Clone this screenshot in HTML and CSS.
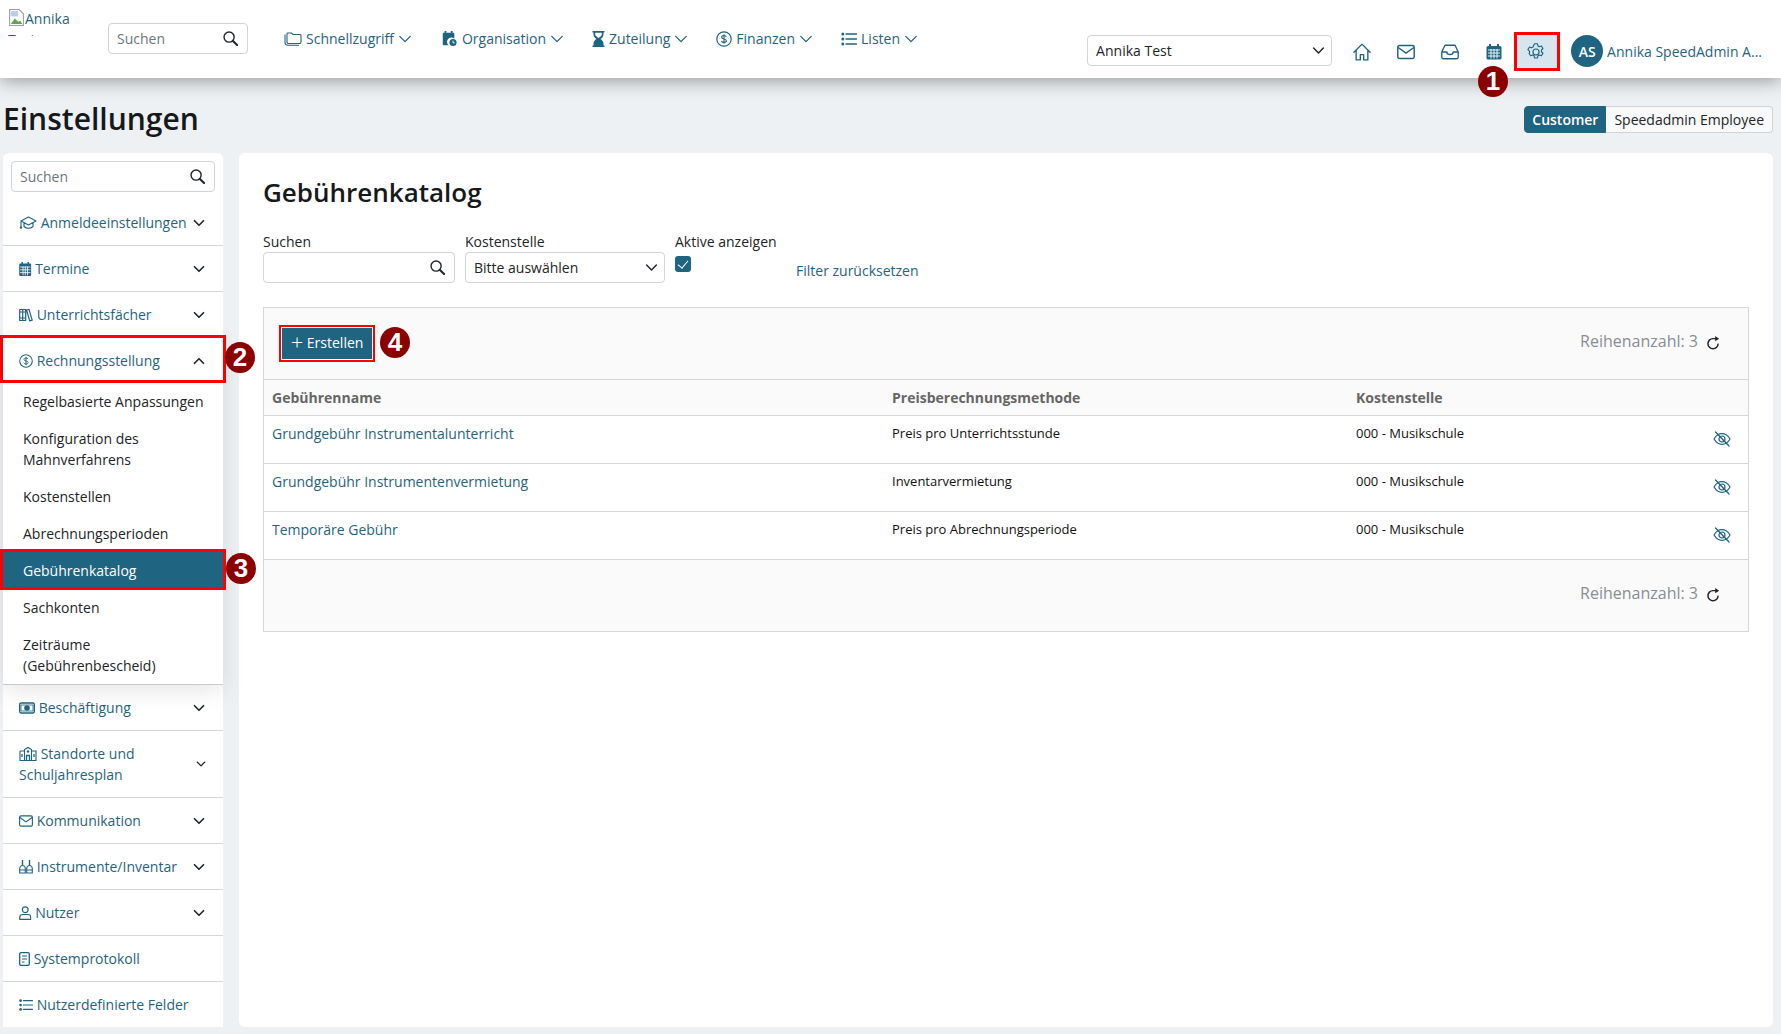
FILE: index.html
```html
<!DOCTYPE html>
<html lang="de">
<head>
  <title>Gebührenkatalog</title>
  <meta charset="utf-8">
  <link rel="stylesheet" href="styles.css">
</head>
<body>
  <svg class="sprite" xmlns="http://www.w3.org/2000/svg">
    <symbol id="i-search" viewBox="0 0 16 16"><circle cx="6.5" cy="6.5" r="5.4" fill="none" stroke="currentColor" stroke-width="1.500"/><path d="M10.600 10.600l4.400 4.400" stroke="currentColor" stroke-width="2.200" stroke-linecap="round"/></symbol>
    <symbol id="i-down" viewBox="0 0 16 16"><path d="M2 5l6 6 6-6" fill="none" stroke="currentColor" stroke-linecap="round" stroke-linejoin="round"/></symbol>
    <symbol id="i-up" viewBox="0 0 16 16"><path d="M2 11l6-6 6 6" fill="none" stroke="currentColor" stroke-linecap="round" stroke-linejoin="round"/></symbol>
    <symbol id="i-folders" viewBox="0 0 18 16" preserveAspectRatio="none"><path d="M3.500 2h4l1.500 1.500h7a1 1 0 0 1 1 1V11a1.500 1.500 0 0 1-1.500 1.500h-11A1.500 1.500 0 0 1 3 11V2.500a.5.5 0 0 1 .5-.5zM1 3.500v8a3 3 0 0 0 3 2.800h11" fill="none" stroke="currentColor" stroke-width="1.100"/></symbol>
    <symbol id="i-calclock" viewBox="0 0 18 18"><path d="M4 0h2v2h5V0h2v2h1a1 1 0 0 1 1 1v5.500a4.800 4.800 0 0 0-6.500 7.500H3a1 1 0 0 1-1-1V3a1 1 0 0 1 1-1h1z" fill="currentColor"/><circle cx="13.500" cy="13" r="4" fill="currentColor"/><path d="M13.500 10.800v2.500h2" fill="none" stroke="#fff" stroke-width="1"/></symbol>
    <symbol id="i-hourglass" viewBox="0 0 13 16"><path d="M.5 0h12v1.500h-1v2c0 2-1.500 3.500-3 4.500 1.500 1 3 2.500 3 4.500v2h1V16H.5v-1.500h1v-2c0-2 1.500-3.500 3-4.500-1.500-1-3-2.500-3-4.500v-2h-1z" fill="currentColor"/><path d="M3.200 1.800h6.600v1.700c0 1.200-1.800 2.600-3.300 3.500-1.500-.9-3.300-2.300-3.300-3.500z" fill="#fff"/></symbol>
    <symbol id="i-dollar" viewBox="0 0 16 16"><circle cx="8" cy="8" r="7.200" fill="none" stroke="currentColor" stroke-width="1.200"/><path d="M10.300 5.800C10 4.900 9.100 4.500 8 4.500c-1.300 0-2.300.6-2.300 1.700 0 2.400 4.700 1.200 4.700 3.600 0 1.100-1 1.700-2.400 1.700-1.200 0-2.200-.5-2.500-1.500M8 3.300v9.400" fill="none" stroke="currentColor" stroke-width="1.100"/></symbol>
    <symbol id="i-list" viewBox="0 0 16 16"><path d="M5 3h10.500M5 8h10.500M5 13h10.500" stroke="currentColor" stroke-width="1.300" stroke-linecap="round"/><circle cx="1.800" cy="3" r="1.500" fill="currentColor"/><circle cx="1.800" cy="8" r="1.500" fill="currentColor"/><circle cx="1.800" cy="13" r="1.500" fill="currentColor"/></symbol>
    <symbol id="i-house" viewBox="0 0 16 16"><path d="M.8 8.300L8 1l7.200 7.300M2.800 6.300V15h3.700v-4.700h3V15h3.700V6.300" fill="none" stroke="currentColor" stroke-width="1.200" stroke-linejoin="round" stroke-linecap="round"/></symbol>
    <symbol id="i-mail" viewBox="0 0 16 16"><rect x=".7" y="2.200" width="14.600" height="11.600" rx="1.500" fill="none" stroke="currentColor" stroke-width="1.300"/><path d="M1 4l7 5 7-5" fill="none" stroke="currentColor" stroke-width="1.300"/></symbol>
    <symbol id="i-inbox" viewBox="0 0 16 16"><path d="M3.500 2h9l2.800 6v4.500a1.500 1.500 0 0 1-1.500 1.500H2.200a1.500 1.500 0 0 1-1.500-1.500V8zM.9 8h4.300c0 3 5.600 3 5.600 0h4.300" fill="none" stroke="currentColor" stroke-width="1.200" stroke-linejoin="round"/></symbol>
    <symbol id="i-calendar" viewBox="0 0 16 16"><path d="M3 0h2v2h6V0h2v2h1a1.500 1.500 0 0 1 1.500 1.500V14a1.500 1.500 0 0 1-1.500 1.500H2A1.500 1.500 0 0 1 .5 14V3.500A1.500 1.500 0 0 1 2 2h1z" fill="currentColor"/><path d="M2 6h12M2 9h12M2 12h12M5 5v9.500M8 5v9.500M11 5v9.500" stroke="#fff" stroke-width=".9"/></symbol>
    <symbol id="i-gear" viewBox="0 0 16 16"><circle cx="8" cy="8" r="2.700" fill="none" stroke="currentColor" stroke-width="1"/><path d="M6.700.7h2.600l.4 1.900 1.300.7 1.800-.7 1.400 2.300-1.400 1.300v1.600l1.400 1.300-1.400 2.300-1.800-.7-1.300.7-.4 1.900H6.700l-.4-1.900-1.300-.7-1.800.7-1.400-2.300L2.200 8.800V7.200L.8 5.900l1.400-2.300 1.800.7 1.300-.7z" fill="none" stroke="currentColor" stroke-width="1" stroke-linejoin="round"/></symbol>
    <symbol id="i-grad" viewBox="0 0 18 16"><path d="M9.500 2L2 6l7.500 4L17 6zM5 8v3.500c2.500 2.300 6.500 2.300 9 0V8M2 6.500v5" fill="none" stroke="currentColor" stroke-width="1.100" stroke-linejoin="round"/><circle cx="2" cy="12.500" r="1.200" fill="currentColor"/></symbol>
    <symbol id="i-books" viewBox="0 0 14 14"><path d="M.7 1.500h3v11h-3zM3.700 1.500h3v11h-3zM7.500 2l2.500-.7 3.200 10.800-2.500.8z" fill="none" stroke="currentColor" stroke-width="1.200" stroke-linejoin="round"/><path d="M.7 4h6M.7 10h6" stroke="currentColor" stroke-width="1"/></symbol>
    <symbol id="i-cash" viewBox="0 0 16 14"><rect x=".7" y="2" width="14.600" height="10" rx="1.500" fill="none" stroke="currentColor" stroke-width="1.400"/><circle cx="8" cy="7" r="2.800" fill="currentColor"/><path d="M2 4h12v6H2z" fill="none" stroke="currentColor" stroke-width=".8"/></symbol>
    <symbol id="i-school" viewBox="0 0 18 16"><path d="M1 5h4.500M12.500 5H17v9.500H1V5M5.500 14.500V3.500L9 1.500l3.500 2v11" fill="none" stroke="currentColor" stroke-width="1.100"/><circle cx="9" cy="5.500" r="1.200" fill="currentColor"/><path d="M7.500 14.500v-5h3v5M3 8v3M15 8v3" stroke="currentColor" stroke-width="1.300" fill="none"/></symbol>
    <symbol id="i-instr" viewBox="0 0 14 14"><path d="M3.500 0v5M10.500 0v5" stroke="currentColor" stroke-width="1.400"/><path d="M.7 13V8.500c0-1.500 1.300-3 2.800-3s2.800 1.500 2.800 3V13zM7.700 13V8.500c0-1.500 1.300-3 2.800-3s2.800 1.500 2.800 3V13z" fill="none" stroke="currentColor" stroke-width="1.100"/><path d="M.7 10h5.600M7.700 10h5.600" stroke="currentColor" stroke-width="1"/></symbol>
    <symbol id="i-person" viewBox="0 0 12.500 14"><circle cx="6.250" cy="3.700" r="2.900" fill="none" stroke="currentColor" stroke-width="1.200"/><path d="M.7 13.300v-1.800c0-1.900 1.300-3 3-3h5.100c1.700 0 3 1.100 3 3v1.800z" fill="none" stroke="currentColor" stroke-width="1.200" stroke-linejoin="round"/></symbol>
    <symbol id="i-doc" viewBox="0 0 11 14"><rect x=".7" y=".7" width="9.600" height="12.600" rx="1.300" fill="none" stroke="currentColor" stroke-width="1.300"/><path d="M3 4h5M3 7h5M3 10h2.500" stroke="currentColor" stroke-width="1.200"/></symbol>
    <symbol id="i-caldark" viewBox="0 0 12.500 14"><path d="M2.500 0h1.500v1.500h4.500V0H10v1.500h1a1.300 1.300 0 0 1 1.300 1.300V12.700A1.300 1.300 0 0 1 11 14H1.500A1.300 1.300 0 0 1 .2 12.700V2.800A1.300 1.300 0 0 1 1.500 1.500h1z" fill="currentColor"/><path d="M1 5h10.500M1 7.800h10.500M1 10.600h10.500M4 4.500v8.800M6.250 4.500v8.800M8.500 4.500v8.800" stroke="#fff" stroke-width=".8"/></symbol>
    <symbol id="i-refresh" viewBox="0 0 16 16"><path d="M13.800 8.700A5.800 5.800 0 1 1 8 3h3.500" fill="none" stroke="currentColor" stroke-width="1.700"/><path d="M10.500 0l4.500 3-4.500 3z" fill="currentColor"/></symbol>
    <symbol id="i-eyeoff" viewBox="0 0 18 16"><path d="M1 8c2-3.500 5-5.300 8-5.300S15 4.500 17 8c-2 3.500-5 5.300-8 5.300S3 11.500 1 8z" fill="none" stroke="currentColor" stroke-width="1.200"/><circle cx="9" cy="8" r="3" fill="none" stroke="currentColor" stroke-width="1.200"/><path d="M2.500 1l13.500 14" stroke="currentColor" stroke-width="1.300" stroke-linecap="round"/></symbol>
  </svg>

  <header class="topbar">
    <div class="topbar-left">
      <a class="logo">
        <svg class="logo-broken" viewBox="0 0 16 16"><path d="M1.500.5h9l4 4v11h-13z" fill="#fff" stroke="#9aa0a6"/><path d="M2.500 14l4-5 3 3 2-1 2 3z" fill="#5fa84a"/><path d="M2.500 2h7v5h-7z" fill="#b9cdf0"/></svg>Annika Test Hub
      </a>
      <div class="search search-top">
        <input type="text" placeholder="Suchen">
        <svg class="search-icon"><use href="#i-search"/></svg>
      </div>
      <nav class="mainnav">
        <a class="nav-item"><svg class="ico ico-18"><use href="#i-folders"/></svg>Schnellzugriff<svg class="chev"><use href="#i-down"/></svg></a>
        <a class="nav-item"><svg class="ico ico-18"><use href="#i-calclock"/></svg>Organisation<svg class="chev"><use href="#i-down"/></svg></a>
        <a class="nav-item"><svg class="ico ico-13"><use href="#i-hourglass"/></svg>Zuteilung<svg class="chev"><use href="#i-down"/></svg></a>
        <a class="nav-item"><svg class="ico"><use href="#i-dollar"/></svg>Finanzen<svg class="chev"><use href="#i-down"/></svg></a>
        <a class="nav-item"><svg class="ico"><use href="#i-list"/></svg>Listen<svg class="chev"><use href="#i-down"/></svg></a>
      </nav>
    </div>
    <div class="topbar-right">
      <div class="select select-school">
        <select><option>Annika Test</option></select>
        <svg class="chev"><use href="#i-down"/></svg>
      </div>
      <div class="tools">
        <a class="tool"><svg><use href="#i-house"/></svg></a>
        <a class="tool"><svg><use href="#i-mail"/></svg></a>
        <a class="tool"><svg><use href="#i-inbox"/></svg></a>
        <a class="tool"><svg><use href="#i-calendar"/></svg></a>
        <a class="tool tool-on"><svg><use href="#i-gear"/></svg></a>
      </div>
      <a class="user"><span class="avatar">AS</span><span class="user-name">Annika SpeedAdmin A...</span></a>
    </div>
  </header>

  <div class="page">
    <div class="page-head">
      <h1>Einstellungen</h1>
      <div class="toggle">
        <button class="toggle-btn toggle-on">Customer</button>
        <button class="toggle-btn">Speedadmin Employee</button>
      </div>
    </div>

    <div class="columns">
      <aside class="sidebar">
        <div class="side-search">
          <div class="search">
            <input type="text" placeholder="Suchen">
            <svg class="search-icon"><use href="#i-search"/></svg>
          </div>
        </div>
        <a class="side-row"><span><svg class="ico ico-18"><use href="#i-grad"/></svg> Anmeldeeinstellungen</span><svg class="chev"><use href="#i-down"/></svg></a>
        <a class="side-row"><span><svg class="ico ico-12"><use href="#i-caldark"/></svg> Termine</span><svg class="chev"><use href="#i-down"/></svg></a>
        <a class="side-row"><span><svg class="ico ico-14"><use href="#i-books"/></svg> Unterrichtsfächer</span><svg class="chev"><use href="#i-down"/></svg></a>
        <div class="side-group">
          <a class="side-row side-row-open marked"><span><svg class="ico ico-14"><use href="#i-dollar"/></svg> Rechnungsstellung</span><svg class="chev"><use href="#i-up"/></svg></a>
          <a class="side-sub">Regelbasierte Anpassungen</a>
          <a class="side-sub">Konfiguration des Mahnverfahrens</a>
          <a class="side-sub">Kostenstellen</a>
          <a class="side-sub">Abrechnungsperioden</a>
          <a class="side-sub side-sub-on marked">Gebührenkatalog</a>
          <a class="side-sub">Sachkonten</a>
          <a class="side-sub">Zeiträume (Gebührenbescheid)</a>
        </div>
        <a class="side-row"><span><svg class="ico ico-16"><use href="#i-cash"/></svg> Beschäftigung</span><svg class="chev"><use href="#i-down"/></svg></a>
        <a class="side-row"><span><svg class="ico ico-18"><use href="#i-school"/></svg> Standorte und Schuljahresplan</span><svg class="chev chev-small"><use href="#i-down"/></svg></a>
        <a class="side-row"><span><svg class="ico ico-14"><use href="#i-mail"/></svg> Kommunikation</span><svg class="chev"><use href="#i-down"/></svg></a>
        <a class="side-row"><span><svg class="ico ico-14"><use href="#i-instr"/></svg> Instrumente/Inventar</span><svg class="chev"><use href="#i-down"/></svg></a>
        <a class="side-row"><span><svg class="ico ico-12"><use href="#i-person"/></svg> Nutzer</span><svg class="chev"><use href="#i-down"/></svg></a>
        <a class="side-row"><span><svg class="ico ico-11"><use href="#i-doc"/></svg> Systemprotokoll</span></a>
        <a class="side-row side-row-last"><span><svg class="ico ico-14"><use href="#i-list"/></svg> Nutzerdefinierte Felder</span></a>
      </aside>

      <main class="content">
        <h2>Gebührenkatalog</h2>
        <div class="filters">
          <div class="field field-search">
            <label>Suchen</label>
            <div class="search">
              <input type="text">
              <svg class="search-icon"><use href="#i-search"/></svg>
            </div>
          </div>
          <div class="field field-select">
            <label>Kostenstelle</label>
            <div class="select">
              <select><option>Bitte auswählen</option></select>
              <svg class="chev"><use href="#i-down"/></svg>
            </div>
          </div>
          <div class="field field-check">
            <label>Aktive anzeigen</label>
            <input class="check" type="checkbox" checked>
          </div>
          <a class="reset">Filter zurücksetzen</a>
        </div>

        <div class="grid-box">
          <div class="grid-bar">
            <button class="btn-create"><span class="plus">+</span> Erstellen</button>
            <div class="rowcount">Reihenanzahl: 3 <svg><use href="#i-refresh"/></svg></div>
          </div>
          <table class="fees">
            <thead>
              <tr><th class="col-name">Gebührenname</th><th class="col-method">Preisberechnungsmethode</th><th>Kostenstelle</th><th class="col-eye"></th></tr>
            </thead>
            <tbody>
              <tr><td><a>Grundgebühr Instrumentalunterricht</a></td><td>Preis pro Unterrichtsstunde</td><td>000 - Musikschule</td><td class="col-eye"><svg><use href="#i-eyeoff"/></svg></td></tr>
              <tr><td><a>Grundgebühr Instrumentenvermietung</a></td><td>Inventarvermietung</td><td>000 - Musikschule</td><td class="col-eye"><svg><use href="#i-eyeoff"/></svg></td></tr>
              <tr><td><a>Temporäre Gebühr</a></td><td>Preis pro Abrechnungsperiode</td><td>000 - Musikschule</td><td class="col-eye"><svg><use href="#i-eyeoff"/></svg></td></tr>
            </tbody>
          </table>
          <div class="grid-bar grid-bar-bottom">
            <div class="rowcount">Reihenanzahl: 3 <svg><use href="#i-refresh"/></svg></div>
          </div>
        </div>
      </main>
    </div>
  </div>

  <span class="badge badge-1">1</span>
  <span class="badge badge-2">2</span>
  <span class="badge badge-3">3</span>
  <span class="badge badge-4">4</span>
</body>
</html>
```

FILE: styles.css
```css
* {
  box-sizing: border-box;
}

body {
  margin: 0;
  height: 1034px;
  overflow: hidden;
  position: relative;
  background-color: #eef1f3;
  color: #212529;
  font-family: "Open Sans", sans-serif;
  font-size: 14px;
  line-height: 21px;
}

a {
  color: #1f6480;
  text-decoration: none;
}

.sprite {
  display: none;
}

/* shared bits */
.ico {
  width: 16px;
  height: 16px;
  vertical-align: -3px;
}
.ico-18 {
  width: 18px;
}
.ico-16 {
  width: 16px;
  height: 14px;
  vertical-align: -2px;
}
.ico-14 {
  width: 14px;
  height: 14px;
  vertical-align: -2px;
}
.ico-13 {
  width: 13px;
}
.ico-12 {
  width: 12.5px;
  height: 14px;
  vertical-align: -2px;
}
.ico-11 {
  width: 11px;
  height: 14px;
  vertical-align: -2px;
}
.chev {
  width: 14px;
  height: 14px;
  flex: none;
  stroke-width: 1.5;
}

.search {
  position: relative;
}
.search input {
  width: 100%;
  height: 100%;
  border: 1px solid #ced4da;
  border-radius: 4px;
  padding: 0 30px 0 8px;
  font: 14px "Open Sans", sans-serif;
  color: #212529;
  background: #fff;
}
.search input::placeholder {
  color: #6c757d;
}
.search-icon {
  position: absolute;
  right: 10px;
  top: 8px;
  width: 15px;
  height: 15px;
  color: #212529;
}

.select {
  position: relative;
  height: 31px;
}
.select select {
  appearance: none;
  width: 100%;
  height: 100%;
  border: 1px solid #ced4da;
  border-radius: 4px;
  padding: 0 28px 0 8px;
  font: 14px "Open Sans", sans-serif;
  color: #212529;
  background: #fff;
}
.select .chev {
  position: absolute;
  right: 7px;
  top: 9px;
  width: 13px;
  height: 13px;
  stroke-width: 1.8;
  color: #212529;
}

/* red frame round a marked sidebar entry */
.marked::after {
  content: "";
  position: absolute;
  z-index: 2;
  top: -3px;
  right: -3px;
  bottom: -1px;
  left: -3px;
  border: 3px solid #f00;
  pointer-events: none;
}

/* top bar */
.topbar {
  position: relative;
  z-index: 2;
  height: 78px;
  display: flex;
  justify-content: space-between;
  background: #fff;
  box-shadow: 0 2px 18px rgba(0, 0, 0, 0.4);
}
.topbar-left {
  display: flex;
  align-items: flex-start;
}
.logo {
  display: block;
  width: 64px;
  height: 28px;
  margin: 8px 0 0 8px;
  overflow: hidden;
  line-height: 21px;
  word-spacing: 20px;
}
.logo-broken {
  width: 17px;
  height: 17px;
  vertical-align: -2px;
}
.search-top {
  width: 140px;
  height: 31px;
  margin: 23px 0 0 36px;
}
.mainnav {
  display: flex;
  gap: 28px;
  margin: 28px 0 0 36px;
}
.nav-item {
  display: flex;
  align-items: center;
  height: 21px;
}
.nav-item .ico {
  margin-right: 4px;
}
.nav-item .chev {
  margin-left: 4px;
}

.topbar-right {
  display: flex;
  align-items: flex-start;
  padding-right: 19px;
}
.select-school {
  width: 245px;
  margin: 35px 1px 0 0;
}
.tools {
  display: flex;
  align-items: center;
  margin: 32px 0 0 7px;
}
.tool {
  width: 44px;
  height: 39px;
  display: flex;
  align-items: center;
  justify-content: center;
}
.tool svg {
  width: 18px;
  height: 18px;
}
.tool:nth-child(4) svg {
  width: 16px;
  height: 16px;
}
.tool-on {
  width: 46px;
  margin-left: -2px;
  padding-right: 2px;
  background: #d7e6ee;
  outline: 3px solid #f00;
  outline-offset: -3px;
}
.user {
  display: flex;
  align-items: center;
  gap: 4px;
  margin: 35px 0 0 11px;
}
.avatar {
  width: 32px;
  height: 32px;
  border-radius: 50%;
  background: #1f6480;
  color: #fff;
  font-weight: 600;
  display: flex;
  align-items: center;
  justify-content: center;
}

/* page */
.page {
  padding: 0 8px 0 3px;
}
.page-head {
  height: 75px;
  display: flex;
  align-items: center;
  justify-content: space-between;
  padding-top: 7px;
}
h1 {
  margin: 0;
  font-size: 30px;
  line-height: 36px;
  font-weight: 600;
  color: #16191c;
}
.toggle {
  display: flex;
  margin-top: 1px;
}
.toggle-btn {
  height: 27px;
  padding: 0 8px;
  border: 1px solid #ced4da;
  border-left: 0;
  border-radius: 0 4px 4px 0;
  background: #f8f9fa;
  font: 14px "Open Sans", sans-serif;
  color: #212529;
}
.toggle-on {
  background: #1f6480;
  border: 1px solid #1f6480;
  border-radius: 4px 0 0 4px;
  padding: 0 7px;
  color: #fff;
  font-weight: 600;
}

.columns {
  display: flex;
  gap: 16px;
  height: 874px;
}

/* sidebar */
.sidebar {
  flex: none;
  width: 220px;
  background: #fff;
  border-radius: 6px 6px 0 0;
}
.side-search {
  height: 47px;
  padding: 8px 8px 0;
}
.side-search .search {
  height: 31px;
}
.side-row {
  display: flex;
  align-items: center;
  justify-content: space-between;
  gap: 4px;
  padding: 12px 18px 12px 16px;
  border-bottom: 1px solid #d5d8da;
  background: #fff;
}
.side-row .chev {
  width: 12px;
  height: 12px;
  stroke-width: 2.2;
  color: #212529;
}
.side-row .chev-small {
  width: 10px;
  height: 10px;
  margin-right: -1px;
}
.side-row-last {
  padding-bottom: 11px;
  border-bottom: 0;
}
.side-row-open {
  position: relative;
  border-bottom: 0;
}
.side-row-open::after {
  bottom: 0;
}
.side-group {
  border-bottom: 1px solid #c8cbcd;
  box-shadow: 0 6px 22px rgba(0, 0, 0, 0.1);
  background: #fff;
  position: relative;
}
.side-sub {
  display: block;
  padding: 8px 16px 8px 20px;
  color: #212529;
}
.side-sub-on {
  background: #1f6480;
  color: #fff;
  font-weight: 500;
  position: relative;
}

/* main card */
.content {
  flex: 1;
  background: #fff;
  border-radius: 6px;
  padding: 21px 24px 0;
}
h2 {
  margin: 0;
  font-size: 26px;
  line-height: 36px;
  font-weight: 600;
  color: #16191c;
}
.filters {
  display: flex;
  align-items: flex-start;
  margin-top: 21px;
}
.field label {
  display: block;
  line-height: 21px;
}
.field-search {
  width: 192px;
  margin-right: 10px;
}
.field-search .search {
  height: 31px;
}
.field-select {
  width: 200px;
  margin-right: 10px;
}
.field-check {
  width: 121px;
}
.check {
  appearance: none;
  display: block;
  position: relative;
  width: 16px;
  height: 16px;
  margin: 4px 0 0;
  border-radius: 3px;
  background: #1f6480;
}
.check:checked::after {
  content: "";
  position: absolute;
  left: 5px;
  top: 2px;
  width: 5px;
  height: 9px;
  border: solid #fff;
  border-width: 0 1.5px 1.5px 0;
  transform: rotate(40deg);
}
.reset {
  margin-top: 29px;
}

.grid-box {
  margin-top: 24px;
  border: 1px solid #d5d8da;
}
.grid-bar {
  height: 71px;
  display: flex;
  align-items: center;
  justify-content: space-between;
  padding: 0 28px 0 18px;
  background: #fafafa;
}
.grid-bar-bottom {
  justify-content: flex-end;
}
.btn-create {
  width: 90px;
  height: 31px;
  border: 0;
  background: #1f6480;
  color: #fff;
  padding: 0 0 2px;
  font: 14px "Open Sans", sans-serif;
  outline: 2px solid #f00;
  outline-offset: 1px;
}
.plus {
  font-size: 22px;
  font-weight: 300;
  vertical-align: -2px;
  line-height: 14px;
}
.rowcount {
  display: flex;
  align-items: center;
  gap: 8px;
  font-size: 16px;
  color: #868e96;
  margin-top: -4px;
}
.rowcount svg {
  width: 14px;
  height: 14px;
  color: #212529;
  margin-top: 2px;
}

.fees {
  width: 100%;
  border-collapse: collapse;
  table-layout: fixed;
}
.fees th {
  height: 36px;
  padding: 0 8px;
  text-align: left;
  font-size: 14px;
  font-weight: 700;
  color: #666;
  background: #fafafa;
  border-top: 1px solid #d5d8da;
  border-bottom: 1px solid #d5d8da;
}
.fees .col-name {
  width: 620px;
}
.fees .col-method {
  width: 464px;
}
.fees .col-eye {
  width: 60px;
}
.fees td {
  height: 48px;
  padding: 7px 8px 0;
  vertical-align: top;
  font-size: 13px;
  color: #111;
  border-bottom: 1px solid #d5d8da;
}
.fees td a {
  font-size: 14px;
}
.fees td.col-eye {
  padding: 15px 0 0 8px;
  color: #1f6480;
}
.col-eye svg {
  width: 18px;
  height: 16px;
  display: block;
  margin-left: 17px;
}

/* numbered callouts lie over the page */
.badge {
  position: absolute;
  z-index: 5;
  width: 30px;
  height: 31px;
  border-radius: 50%;
  background: #8b0000;
  color: #fff;
  font-family: "Liberation Sans", sans-serif;
  font-size: 26px;
  font-weight: 700;
  line-height: 31px;
  text-align: center;
}
.badge-1 { left: 1478px; top: 66px; }
.badge-2 { left: 225px; top: 342px; }
.badge-3 { left: 226px; top: 553px; }
.badge-4 { left: 380px; top: 327px; }
```
